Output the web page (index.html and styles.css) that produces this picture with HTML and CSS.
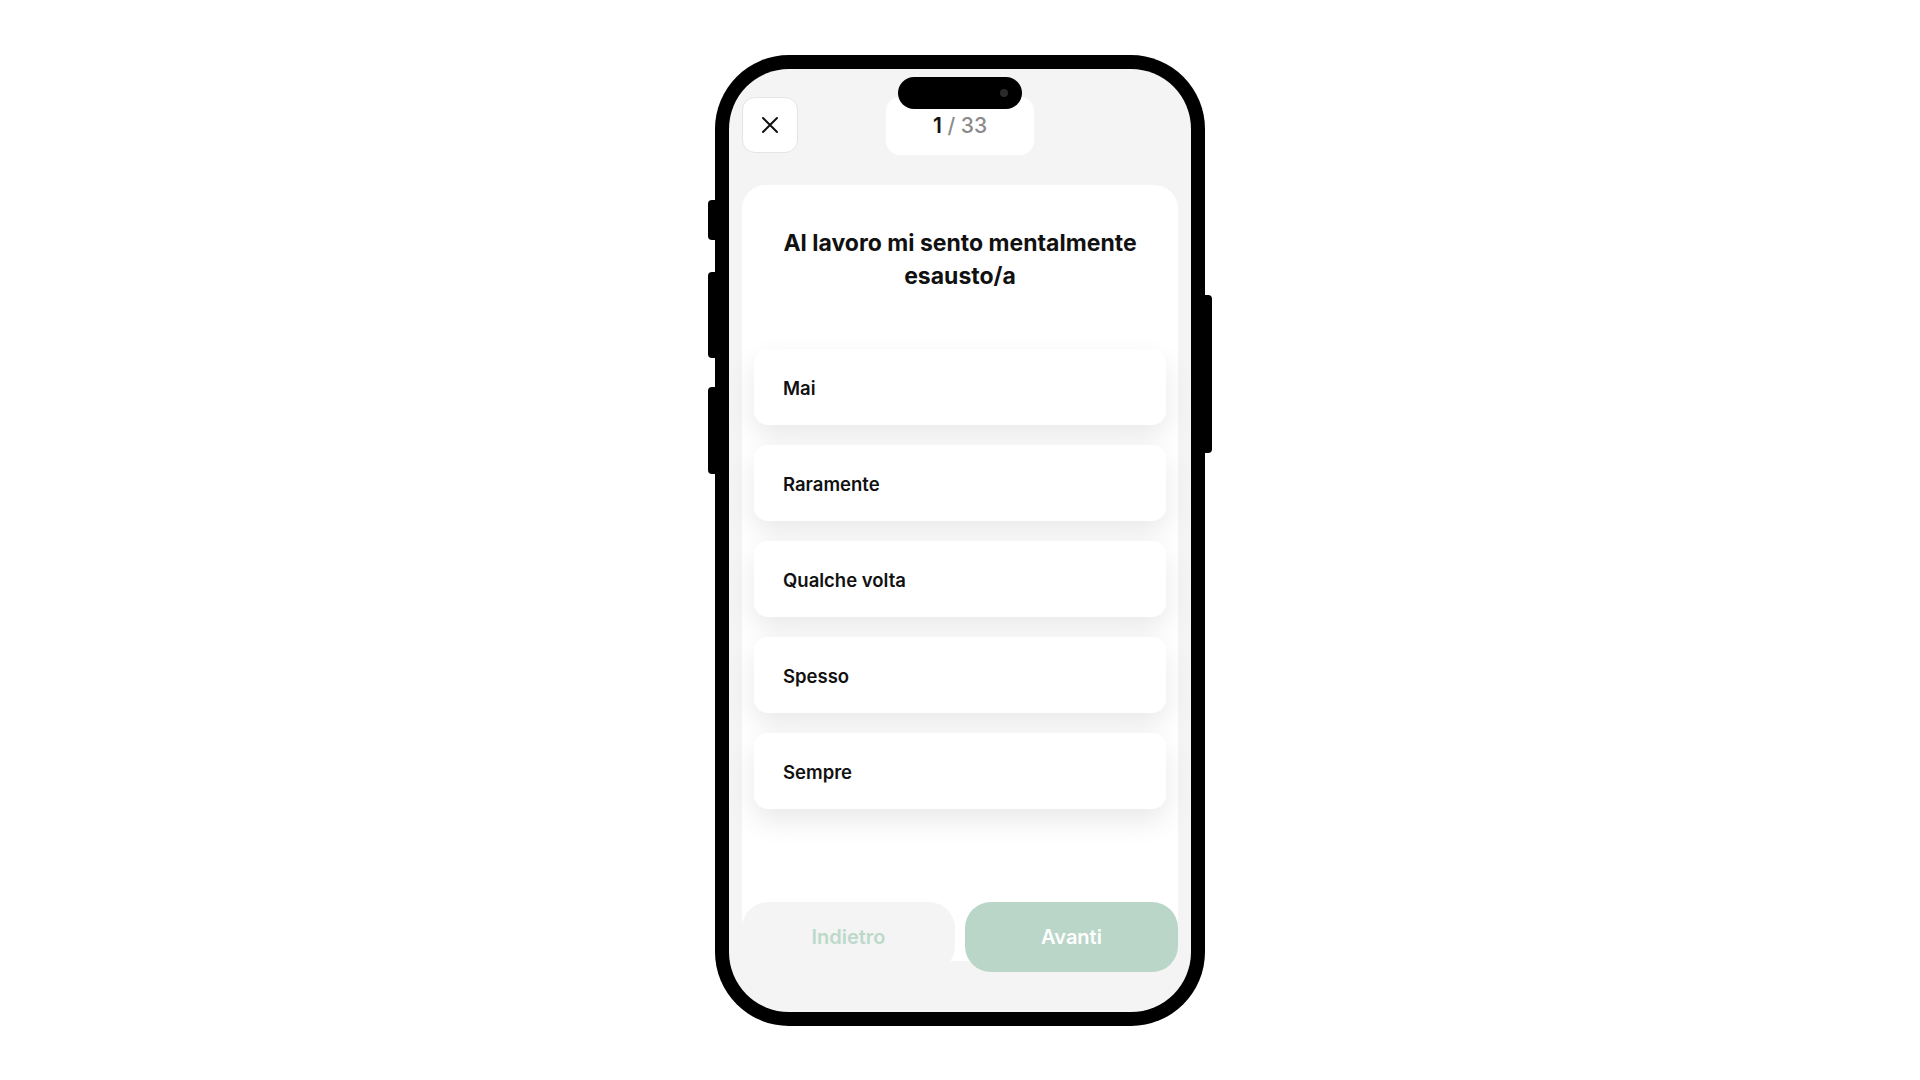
FILE: index.html
```html
<!DOCTYPE html>
<html lang="it">
<head>
<meta charset="utf-8">
<title>Questionario</title>
<link rel="stylesheet" href="styles.css">
</head>
<body>
<div class="stage">
  <div class="phone">
    <span class="side side-l1"></span>
    <span class="side side-l2"></span>
    <span class="side side-l3"></span>
    <span class="side side-r"></span>
    <div class="screen">
      <div class="island"><span class="cam"></span></div>
      <header class="header">
        <button class="close" aria-label="Chiudi">
          <svg width="18" height="18" viewBox="0 0 18 18"><path d="M2 2L16 16M16 2L2 16" stroke="#111" stroke-width="2" stroke-linecap="round"/></svg>
        </button>
        <div class="counter"><span class="cur">1</span><span class="tot"> / 33</span></div>
        <div class="spacer"></div>
      </header>
      <main class="card">
        <h1 class="question">Al lavoro mi sento mentalmente esausto/a</h1>
        <div class="options">
          <div class="option">Mai</div>
          <div class="option">Raramente</div>
          <div class="option">Qualche volta</div>
          <div class="option">Spesso</div>
          <div class="option">Sempre</div>
        </div>
      </main>
      <footer class="footer">
        <button class="btn btn-back">Indietro</button>
        <button class="btn btn-next">Avanti</button>
      </footer>
    </div>
  </div>
</div>
</body>
</html>
```

FILE: styles.css
```css
* { box-sizing: border-box; }
html, body { margin: 0; padding: 0; background: #ffffff; }
body { font-family: Inter, "Noto Sans", "Liberation Sans", sans-serif; }

.stage {
  width: 1920px;
  height: 1080px;
  display: flex;
  justify-content: center;
  padding-top: 55px;
}

.phone {
  position: relative;
  width: 490px;
  height: 971px;
  padding: 14px 14px 14px 14px;
  background: #000;
  border-radius: 74px;
}

.side {
  position: absolute;
  background: #000;
  width: 12px;
  border-radius: 4px;
}
.side-l1 { left: -7px; top: 145px; height: 40px; }
.side-l2 { left: -7px; top: 217px; height: 86px; }
.side-l3 { left: -7px; top: 332px; height: 87px; }
.side-r { right: -7px; top: 240px; height: 158px; }

.screen {
  position: relative;
  height: 100%;
  background: #f4f4f4;
  border-radius: 60px;
  padding: 28px 13px 40px;
  display: flex;
  flex-direction: column;
  overflow: hidden;
}

.island {
  position: absolute;
  top: 8px;
  left: 50%;
  width: 124px;
  height: 32px;
  margin-left: -62px;
  background: #000;
  border-radius: 16px;
  z-index: 3;
}
.cam {
  position: absolute;
  right: 14px;
  top: 12px;
  width: 8px;
  height: 8px;
  border-radius: 50%;
  background: #2a2a2a;
}

.header {
  display: grid;
  grid-template-columns: 1fr auto 1fr;
  align-items: start;
  height: 56px;
}
.close {
  width: 56px;
  height: 56px;
  border: 1px solid #e4e4e4;
  background: #fff;
  border-radius: 13px;
  display: flex;
  align-items: center;
  justify-content: center;
  padding: 0;
}
.counter {
  width: 148px;
  height: 58px;
  background: #fff;
  border-radius: 14px;
  display: flex;
  align-items: center;
  justify-content: center;
  padding-bottom: 2px;
  font-size: 21px;
  font-weight: 500;
  color: #8a8a8a;
}
.counter .cur { color: #111; font-weight: 600; }
.counter .tot { white-space: pre; }

.card {
  flex: 1;
  margin-top: 32px;
  background: #fff;
  border-radius: 24px;
  padding: 42px 12px 0;
  display: flex;
  flex-direction: column;
}
.question {
  margin: 0;
  text-align: center;
  font-size: 23px;
  line-height: 33px;
  font-weight: 700;
  color: #111;
  padding: 0 16px;
}
.options {
  margin-top: 56px;
  display: flex;
  flex-direction: column;
  gap: 20px;
}
.option {
  height: 76px;
  background: #fff;
  border-radius: 14px;
  padding: 2px 29px 0;
  display: flex;
  align-items: center;
  font-size: 18.5px;
  font-weight: 600;
  color: #111;
  box-shadow: 0 12px 28px rgba(0, 0, 0, 0.09);
}

.footer {
  position: relative;
  z-index: 2;
  margin-top: -59px;
  display: grid;
  grid-template-columns: 1fr 1fr;
  gap: 10px;
  height: 70px;
}
.btn {
  border: 0;
  border-radius: 26px;
  font-family: inherit;
  font-size: 20px;
  font-weight: 600;
  height: 70px;
}
.btn-back {
  background: #f4f4f4;
  color: #bcd9cb;
}
.btn-next {
  background: #b9d6c8;
  color: #ffffff;
}
```
